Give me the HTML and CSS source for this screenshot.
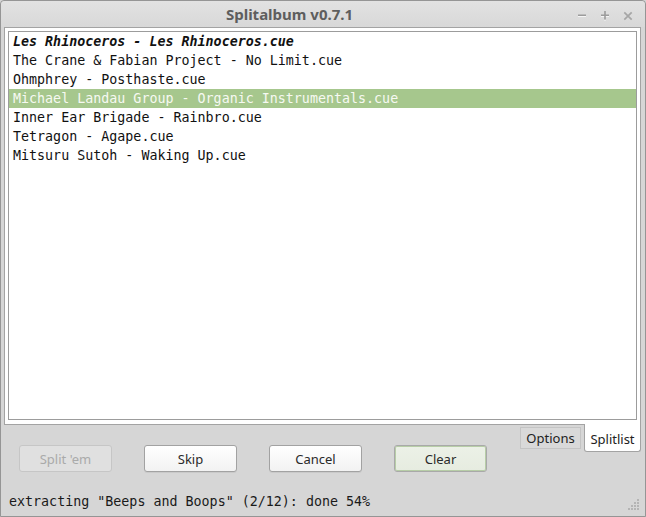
FILE: index.html
```html
<!DOCTYPE html>
<html>
<head>
<meta charset="utf-8">
<title>Splitalbum</title>
<link rel="stylesheet" href="styles.css">
</head>
<body>
<div class="window">
  <div class="titlebar">
    <span class="title">Splitalbum v0.7.1</span>
    <div class="wm">
      <svg class="wm-btn" width="10" height="10" viewBox="0 0 10 10"><rect x="1" y="5" width="8" height="1" fill="#fff"/><rect x="1" y="3.5" width="8" height="1.6" fill="#9c9c9c"/></svg>
      <svg class="wm-btn" width="10" height="10" viewBox="0 0 10 10"><rect x="1" y="5" width="8" height="1" fill="#fff"/><rect x="4.2" y="8.5" width="1.6" height="1" fill="#fff"/><rect x="1" y="3.5" width="8" height="1.6" fill="#9c9c9c"/><rect x="4.2" y="0" width="1.6" height="8.6" fill="#9c9c9c"/></svg>
      <svg class="wm-btn" width="10" height="10" viewBox="0 0 10 10"><path d="M1.3 1.3 L8.7 8.7 M8.7 1.3 L1.3 8.7" stroke="#a6a6a6" stroke-width="1.7"/></svg>
    </div>
  </div>
  <div class="content">
    <div class="pane">
      <ul class="list">
        <li class="current">Les Rhinoceros - Les Rhinoceros.cue</li>
        <li>The Crane &amp; Fabian Project - No Limit.cue</li>
        <li>Ohmphrey - Posthaste.cue</li>
        <li class="selected">Michael Landau Group - Organic Instrumentals.cue</li>
        <li>Inner Ear Brigade - Rainbro.cue</li>
        <li>Tetragon - Agape.cue</li>
        <li>Mitsuru Sutoh - Waking Up.cue</li>
      </ul>
    </div>
    <div class="controls">
      <div class="buttons">
        <button class="btn" disabled>Split 'em</button>
        <button class="btn">Skip</button>
        <button class="btn">Cancel</button>
        <button class="btn default">Clear</button>
      </div>
      <div class="tabbar">
        <div class="tab">Options</div>
        <div class="tab active">Splitlist</div>
      </div>
    </div>
    <div class="statusbar">
      <span class="status">extracting "Beeps and Boops" (2/12): done 54%</span>
      <svg class="grip" width="12" height="12" viewBox="0 0 12 12">
        <g fill="#b4b4b4">
          <rect x="9" y="0" width="2" height="2"/>
          <rect x="6" y="3" width="2" height="2"/><rect x="9" y="3" width="2" height="2"/>
          <rect x="3" y="6" width="2" height="2"/><rect x="6" y="6" width="2" height="2"/><rect x="9" y="6" width="2" height="2"/>
          <rect x="0" y="9" width="2" height="2"/><rect x="3" y="9" width="2" height="2"/><rect x="6" y="9" width="2" height="2"/><rect x="9" y="9" width="2" height="2"/>
        </g>
      </svg>
    </div>
  </div>
</div>
</body>
</html>
```

FILE: styles.css
```css
* { box-sizing: border-box; }
html, body { margin: 0; padding: 0; }
body { width: 646px; height: 517px; overflow: hidden; background: #d6d6d6; }

.window {
  width: 646px;
  height: 517px;
  border: 1px solid #959595;
  border-radius: 4px 4px 0 0;
  background: #d6d6d6;
  display: flex;
  flex-direction: column;
  font-family: "Noto Sans", "DejaVu Sans", sans-serif;
}

.titlebar {
  height: 26px;
  flex: none;
  display: flex;
  align-items: center;
  background: linear-gradient(#e2e2e2, #d8d8d8);
  border-radius: 4px 4px 0 0;
}
.title {
  flex: 1;
  text-align: center;
  font-weight: bold;
  font-size: 15px;
  color: #5e5e5e;
  padding-top: 0;
  padding-left: 1px;
}
.wm {
  width: 68px;
  display: flex;
  gap: 13px;
  align-items: center;
  padding-left: 0;
  padding-top: 3px;
}
.wm-btn { display: block; }

.content {
  flex: 1;
  display: flex;
  flex-direction: column;
  padding: 0 4px 0 3px;
}

.pane {
  height: 398px;
  background: #ffffff;
  border: 1px solid #a3a3a3;
  padding: 3px 3px 4px 3px;
  display: flex;
  flex-direction: column;
}
.list {
  flex: 1;
  margin: 0;
  padding: 0;
  list-style: none;
  border: 1px solid #9c9c9c;
  background: #fff;
  font-family: "DejaVu Sans Mono", monospace;
  font-size: 13.33px;
  color: #111;
}
.list li {
  height: 19px;
  line-height: 19px;
  padding-left: 4px;
  white-space: nowrap;
}
.list li.current { font-weight: bold; font-style: italic; }
.list li.selected { background: #a6c78d; color: #f6f9f2; }

.controls {
  display: flex;
  justify-content: space-between;
  height: 48px;
  flex: none;
}
.buttons {
  display: flex;
  gap: 32px;
  padding-left: 15px;
  padding-top: 20px;
  align-items: flex-start;
}
.btn {
  width: 93px;
  height: 27px;
  border: 1px solid #a2a2a2;
  border-radius: 3px;
  background: linear-gradient(#ffffff, #f2f2f2);
  font-family: "Noto Sans", "DejaVu Sans", sans-serif;
  font-size: 13px;
  color: #2a2a2a;
  padding: 0;
  box-shadow: 0 1px 0 rgba(0,0,0,0.06);
}
.btn:disabled {
  background: #e0e0e0;
  border-color: #c6c6c6;
  color: #aaaaaa;
  box-shadow: none;
}
.btn.default {
  border-color: #a9a9a9;
  background: linear-gradient(#ecf1e7, #e6ece0);
  box-shadow: inset 0 0 0 1px #b7cda7;
}

.tabbar {
  display: flex;
  align-items: flex-start;
  margin-top: -1px;
  gap: 3px;
}
.tab {
  font-size: 13px;
  color: #222;
}
.tab:not(.active) {
  margin-top: 3px;
  height: 22px;
  width: 61px;
  border: 1px solid #c4c4c4;
  background: #d9d9d9;
  display: flex;
  align-items: center;
  justify-content: center;
  padding-top: 0;
}
.tab.active {
  height: 28px;
  width: 57px;
  background: #fff;
  border: 1px solid #a3a3a3;
  border-top: none;
  border-radius: 0 0 3px 3px;
  display: flex;
  align-items: center;
  justify-content: center;
  padding-top: 2px;
}

.statusbar {
  flex: 1;
  display: flex;
  align-items: flex-end;
  justify-content: space-between;
  padding: 0 1px 5px 5px;
}
.status {
  font-family: "DejaVu Sans Mono", monospace;
  font-size: 13.33px;
  color: #1a1a1a;
  padding-bottom: 2px;
}
.grip { display: block; margin-bottom: 0; }
```
